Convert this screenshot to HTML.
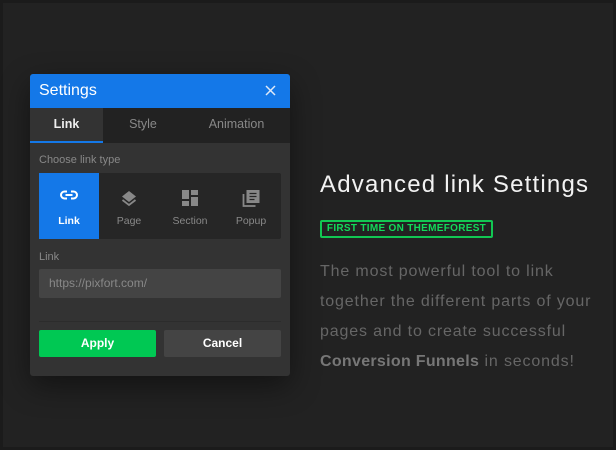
<!DOCTYPE html>
<html><head><meta charset="utf-8"><style>
*{margin:0;padding:0;box-sizing:border-box}
html,body{width:616px;height:450px;overflow:hidden;background:#1b1b1b;font-family:"Liberation Sans",sans-serif}
.bg{position:absolute;left:3px;top:3px;width:610px;height:444px;background:#222}
.panel{position:absolute;left:30px;top:74px;width:260px;height:302px;background:#333;border-radius:3px;overflow:hidden;box-shadow:0 10px 30px rgba(0,0,0,.45)}
.hd{height:34px;background:#1478e8;color:#fff;font-size:16px;line-height:34px;padding-left:9px;position:relative}
.hd svg{position:absolute;right:14px;top:11px}
.tabs{height:35px;background:#222;position:relative;font-size:12.5px}
.tabs div{position:absolute;top:0;line-height:33px;color:#888;text-align:center}
.tabs .a{left:0;width:73px;background:#333;color:#eee;border-bottom:2px solid #1478e8;height:35px;font-weight:bold}
.lbl{position:absolute;left:9px;font-size:11px;color:#888}
.types{position:absolute;left:9px;top:99px;width:242px;height:66px;background:#262626;border-radius:2px}
.t{position:absolute;top:0;height:66px;width:60px;text-align:center;color:#888;font-size:10.5px}
.t span{position:absolute;left:0;right:0;top:42px}
.t svg{position:absolute;left:50%;top:17px;transform:translateX(-50%)}
.t.a{background:#1478e8;color:#fff;font-weight:bold}
.inp{position:absolute;left:9px;top:195px;width:242px;height:29px;background:#444;border-radius:2px;color:#888;font-size:12px;line-height:29px;padding-left:10px}
.sep{position:absolute;left:9px;top:247px;width:242px;height:1px;background:#2c2c2c}
.btn{position:absolute;top:256px;width:117px;height:27px;border-radius:2px;color:#fff;font-size:12px;font-weight:bold;line-height:27px;text-align:center}
h1{position:absolute;left:320px;top:171px;font-weight:normal;color:#f2f2f2;font-size:24px;letter-spacing:1.2px;white-space:nowrap}
.badge{position:absolute;left:320px;top:220px;width:173px;height:18px;border:2px solid #12c753;border-radius:2px;color:#12d95a;font-size:10px;font-weight:bold;line-height:14px;text-align:center;letter-spacing:.3px}
.p{position:absolute;left:320px;top:257px;color:#666;font-size:16px;line-height:30px;white-space:nowrap;letter-spacing:.85px}
.p b{color:#777;letter-spacing:.3px}
</style></head><body>
<div class="bg"></div>
<div class="panel">
 <div class="hd">Settings<svg width="11" height="11" viewBox="0 0 11 11"><path d="M1 1L10 10M10 1L1 10" stroke="#dfe9f8" stroke-width="1.5"/></svg></div>
 <div class="tabs"><div class="a">Link</div><div style="left:73px;width:80px">Style</div><div style="left:153px;width:107px">Animation</div></div>
 <div class="lbl" style="top:80px">Choose link type</div>
 <div class="types">
  <div class="t a" style="left:0"><svg width="18" height="10" viewBox="0 0 18 10"><path d="M7 1.5H4.5a3.5 3.5 0 0 0 0 7H7M11 1.5h2.5a3.5 3.5 0 0 1 0 7H11M5.5 5h7" stroke="#fff" stroke-width="2" fill="none"/></svg><span>Link</span></div>
  <div class="t" style="left:60px"><svg width="16" height="17" viewBox="0 0 16 17"><path d="M8 1L15 6.5 8 12 1 6.5Z" fill="#888"/><path d="M1.5 10L8 15 14.5 10" stroke="#888" stroke-width="1.8" fill="none"/></svg><span>Page</span></div>
  <div class="t" style="left:121px"><svg width="16" height="16" viewBox="0 0 16 16"><path d="M0 0h7v9H0zM9 0h7v5H9zM0 11h7v5H0zM9 7h7v9H9z" fill="#888"/></svg><span>Section</span></div>
  <div class="t" style="left:182px"><svg width="17" height="17" viewBox="0 0 17 17"><path d="M1 4v12h12" stroke="#888" stroke-width="1.8" fill="none"/><path d="M4 0h13v13H4z" fill="#888"/><path d="M7 3.5h7M7 6.5h7M7 9.5h5" stroke="#262626" stroke-width="1.3"/></svg><span>Popup</span></div>
 </div>
 <div class="lbl" style="top:177px">Link</div>
 <div class="inp">https://pixfort.com/</div>
 <div class="sep"></div>
 <div class="btn" style="left:9px;background:#00c853">Apply</div>
 <div class="btn" style="left:134px;background:#444">Cancel</div>
</div>
<h1>Advanced link Settings</h1>
<div class="badge">FIRST TIME ON THEMEFOREST</div>
<div class="p">The most powerful tool to link<br>together the different parts of your<br>pages and to create successful<br><b>Conversion Funnels</b> in seconds!</div>
</body></html>
